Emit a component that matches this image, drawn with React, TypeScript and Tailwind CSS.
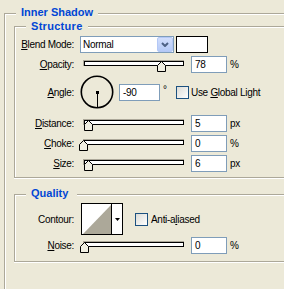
import React from "react";

function Thumb({ left }: { left: number }) {
  return (
    <svg
      className="absolute top-0"
      style={{ left: `${left}px` }}
      width="9"
      height="11"
      viewBox="0 0 9 11"
    >
      <polygon
        points="0.5,10.5 0.5,4.5 4.5,0.5 8.5,4.5 8.5,10.5"
        fill="#F1EFE2"
        stroke="#000"
        strokeWidth="1"
      />
    </svg>
  );
}

function Slider({ left }: { left: number }) {
  return (
    <div className="relative ml-[9px] mt-[4px] h-[6px] w-[101px] self-start border-l border-t border-[#ACA899]">
      <div className="h-[5px] border border-black bg-white" />
      <Thumb left={left} />
    </div>
  );
}

function Field({ value, w = "w-[36px]" }: { value: string; w?: string }) {
  return (
    <div className={`h-[17px] ${w} border border-[#7F9DB9] bg-white pl-[3px] leading-[15px]`}>
      {value}
    </div>
  );
}

function Label({ children }: { children: React.ReactNode }) {
  return <div className="w-[59px] shrink-0 text-right">{children}</div>;
}

function U({ children }: { children: React.ReactNode }) {
  return <span className="underline decoration-1 underline-offset-[1px]">{children}</span>;
}

function SliderRow({
  label,
  value,
  unit,
  left,
  mt,
}: {
  label: React.ReactNode;
  value: string;
  unit: string;
  left: number;
  mt: string;
}) {
  return (
    <div className={`flex h-[17px] items-center ${mt}`}>
      <Label>{label}</Label>
      <Slider left={left} />
      <div className="ml-[7px]">
        <Field value={value} />
      </div>
      <span className="ml-[3px]">{unit}</span>
    </div>
  );
}

function Checkbox() {
  return (
    <div className="h-[13px] w-[13px] shrink-0 border border-[#1C5180] bg-gradient-to-br from-[#DCDCD7] to-white" />
  );
}

export default function App() {
  return (
    <div className="h-[289px] w-[284px] overflow-hidden bg-[#ECE9D8] font-['Liberation_Sans',Arial,sans-serif] text-[10px] leading-[13px] tracking-[-0.3px] text-black">
      <div className="relative ml-[4px] mt-[13px] h-[300px] border-l border-t border-[#ACA899] shadow-[inset_1px_1px_0_#fff]">
        <span className="absolute left-[11px] top-[-8px] w-[82px] bg-[#ECE9D8] pl-[5px] text-[11px] font-bold leading-[13px] tracking-normal text-[#0046D5]">
          Inner Shadow
        </span>

        {/* Structure */}
        <div className="relative ml-[9px] mt-[12px] border-b border-l border-t border-[#ACA899] pb-[5px] shadow-[inset_1px_1px_0_#fff,0_1px_0_#fff]">
          <span className="absolute left-[11px] top-[-7px] w-[62px] bg-[#ECE9D8] pl-[5px] text-[11px] font-bold leading-[13px] tracking-[0.3px] text-[#0046D5]">
            Structure
          </span>

          <div className="mt-[9px] flex h-[17px] items-center">
            <Label>
              <U>B</U>lend Mode:
            </Label>
            <div className="ml-[6px] flex h-[17px] w-[94px] items-center border border-[#7F9DB9] bg-white">
              <span className="flex-1 pl-[2px]">Normal</span>
              <div className="flex h-[15px] w-[16px] items-center justify-center rounded-[2px] border border-[#B4C8F6] bg-gradient-to-b from-[#D2DEFC] to-[#B5CAF7]">
                <svg width="8" height="5" viewBox="0 0 8 5">
                  <polyline points="1,1 4,4 7,1" fill="none" stroke="#4D6185" strokeWidth="2" />
                </svg>
              </div>
            </div>
            <div className="ml-[2px] h-[17px] w-[32px] border border-black bg-white" />
          </div>

          <SliderRow label={<><U>O</U>pacity:</>} value="78" unit="%" left={73} mt="mt-[3px]" />

          <div className="mt-[2px] flex h-[34px] items-center">
            <Label>
              <U>A</U>ngle:
            </Label>
            <svg className="ml-[6px]" width="34" height="34" viewBox="0 0 34 34">
              <circle cx="17" cy="17" r="15.7" fill="none" stroke="#000" strokeWidth="1.6" />
              <rect x="16" y="16" width="3" height="3" fill="#000" />
              <line x1="17.5" y1="17" x2="17.5" y2="32" stroke="#000" strokeWidth="1" />
            </svg>
            <div className="ml-[5px]">
              <Field value="-90" w="w-[41px]" />
            </div>
            <span className="mb-[6px] w-[16px] pl-[3px]">°</span>
            <Checkbox />
            <span className="ml-[2px]">
              Use <U>G</U>lobal Light
            </span>
          </div>

          <SliderRow label={<><U>D</U>istance:</>} value="5" unit="px" left={0} mt="mt-[6px]" />
          <SliderRow label={<><U>C</U>hoke:</>} value="0" unit="%" left={-5} mt="mt-[3px]" />
          <SliderRow label={<><U>S</U>ize:</>} value="6" unit="px" left={0} mt="mt-[3px]" />
        </div>

        {/* Quality */}
        <div className="relative ml-[9px] mt-[16px] border-b border-l border-t border-[#ACA899] pb-[7px] shadow-[inset_1px_1px_0_#fff,0_1px_0_#fff]">
          <span className="absolute left-[11px] top-[-8px] w-[51px] bg-[#ECE9D8] pl-[5px] text-[11px] font-bold leading-[13px] tracking-normal text-[#0046D5]">
            Quality
          </span>

          <div className="mt-[8px] flex h-[32px] items-center">
            <Label>Contour:</Label>
            <div className="ml-[7px] flex h-[32px] w-[42px] border border-black bg-white">
              <svg width="29" height="30" viewBox="0 0 29 30">
                <polygon points="1,30 29,1 29,30" fill="#ACA899" />
              </svg>
              <div className="w-[1px] bg-black" />
              <div className="flex flex-1 items-center justify-center">
                <svg width="5" height="3" viewBox="0 0 5 3">
                  <polygon points="0,0 5,0 2.5,3" fill="#000" />
                </svg>
              </div>
            </div>
            <div className="ml-[12px]">
              <Checkbox />
            </div>
            <span className="ml-[3px]">
              Anti-a<U>l</U>iased
            </span>
          </div>

          <SliderRow label={<><U>N</U>oise:</>} value="0" unit="%" left={-4} mt="mt-[2px]" />
        </div>
      </div>
    </div>
  );
}
